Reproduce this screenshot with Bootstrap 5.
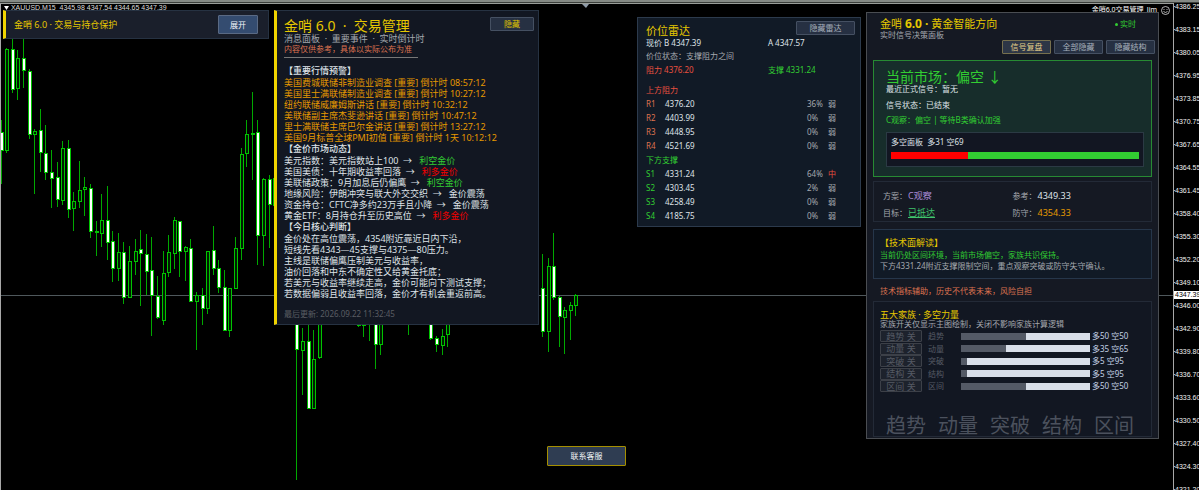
<!DOCTYPE html>
<html lang="zh-CN">
<head>
<meta charset="utf-8">
<meta name="viewport" content="width=device-width, initial-scale=1">
<title>XAUUSD M15</title>
<link href="https://cdn.jsdelivr.net/npm/bootstrap@5.3.0/dist/css/bootstrap.min.css" rel="stylesheet">
<style>
body{background:#000;color:#dfe3e8;font-family:"Noto Sans","Noto Sans CJK SC",sans-serif;font-size:8px;line-height:12px}
.desk{height:100vh;min-height:440px;overflow:hidden}
.topline{height:3px;flex:none;background:#3c403c;border-top:2px solid #858a85}
.plot{min-height:0}
.chart-area{border-top:1px solid #9a9e9a;border-left:1px solid #a8a8a8}
.candles{position:absolute;inset:0;width:100%;height:100%}
.price-axis{width:26px;border-left:1px solid #a8a8a8;font-family:"Liberation Sans",sans-serif;font-size:7px;color:#f0f0f0;overflow:hidden}
.price-axis ol{margin-top:-8px}
.price-axis li{height:23px;line-height:23px;padding-left:1px;white-space:nowrap;position:relative}
.price-axis li::before{content:"";position:absolute;left:0;top:11px;width:1px;height:1px;background:#a8a8a8}
.price-now{position:absolute;left:0;right:0;top:288px;height:8px;line-height:8px;padding-left:1px;background:#fff;color:#000}
.chart-title{position:absolute;top:-1px;left:3px;font-family:"Liberation Sans",sans-serif;font-size:7px;line-height:10px;color:#ddd;white-space:pre}
.expert{position:absolute;top:1px;right:3px;font-size:7px;line-height:10px;color:#fff}
.win{position:absolute;border:1px solid #263242;background:#121722}
.win-save{left:3px;top:10px;width:266px;height:29px;background:#1a1f2b;border-left:3px solid #f0d400}
.win-news{left:274px;top:10px;width:265px;border-left:3px solid #f0d400;padding:6px 4px 4px 7px}
.win-radar{right:338px;top:17px;width:224px;padding:3px 5px 3px 8px;background:#111a26;border-color:#2c3a4c}
.win-main{right:40px;top:12px;width:293px;border-color:#4a4d52;background:#151923;padding:4px 3px 1px 6px}
.pill{--bs-btn-font-size:8px;--bs-btn-line-height:12px;--bs-btn-padding-x:0;--bs-btn-padding-y:0;--bs-btn-border-radius:1px;--bs-btn-color:#a9b1bd;--bs-btn-bg:#263042;--bs-btn-border-color:#455062;--bs-btn-hover-color:#fff;--bs-btn-hover-bg:#344c70;width:49px;height:14px}
.pill-open{--bs-btn-bg:#344c70;--bs-btn-border-color:#5a6a84;--bs-btn-color:#f4f6fa;width:40px;height:19px;margin-right:10px}
.pill-hide{--bs-btn-color:#e0c800;width:44px}
.pill-radar{width:59px}
.pill-sand{--bs-btn-color:#e6d08a;--bs-btn-border-color:#76704e;--bs-btn-bg:#2d3646}
.pill-off{--bs-btn-font-size:9px;--bs-btn-color:#555a64;--bs-btn-bg:#1d222c;--bs-btn-border-color:#3c4048;--bs-btn-line-height:9px;width:42px;height:12px;white-space:pre}
.contact{--bs-btn-bg:#2f3d52;--bs-btn-border-color:#a58f00;--bs-btn-color:#f2f4f6;position:absolute;left:547px;top:446px;width:79px;height:20px}
.gold{color:#e6c800}.lime{color:#32cd32}.rose{color:#e8503f}.coral{color:#dd7350}.dim{color:#a4a8ae}.amber{color:#e69900}.red{color:#f00000}
.t9{font-size:9px}.t11{font-size:11px;line-height:14px}.t14{font-size:14px;line-height:16px}
.lh8{line-height:8px}.lh10{line-height:10px}.lh11{line-height:11px}.lh14{line-height:14px}.lh15{line-height:15px}.lh17{line-height:17px}
.pre{white-space:pre}
.news{font-size:9px;line-height:11px;white-space:pre}
.news h3{font-size:9px;line-height:12px;margin:0}
.rule{width:134px;height:1px;background:#777;margin:3px 0 7px}
.stamp{color:#5a5d62;margin-top:9px}
.levels{margin-top:6px}
.levels td,.levels th{padding:0;height:14px;line-height:14px;font-weight:400}
.levels .lv{width:19px}.levels .pc{width:21px}.levels .st{width:27px}
.radar-title{padding-top:4px;line-height:12px}
.tools{gap:3px;margin-top:1px}
.stack{padding-right:3px;margin-top:6px}
.panelbox{border:1px solid #232a37;padding:0 6px}
.signal{border-color:#278a33;background:#172d2b;padding:8px 7px 9px 12px}
.inner{border:1px solid #2b3a44;background:#121622;padding:3px 4px 7px;margin-top:5px}
.meter{height:7px;background:#32cd32;margin-top:4px}.meter span{display:block;height:100%;background:#f00}
.plan{margin-top:4px;padding:5px 9px 0}
.plan dt{width:25px;font-weight:400;color:#a4a8ae}.plan dd{margin:0;font-size:9px}
.plan dl{margin:0}
.tech{margin-top:7px;padding:7px 6px;background:#111a26;border-color:#26364a}
.warn{padding:6px 7px 4px}
.family{background:#121722;padding-top:8px}
.fam{height:62px;margin-top:2px}
.fam-row{height:12px}
.fam-name{width:33px;margin-left:6px;color:#555a64}
.fam-bar{width:129px;height:7px;background:#d9dfe9;margin-right:2px}.fam-bar span{display:block;height:100%;background:#545a66}
.fam-val{color:#c3d2e6}
.ghost{font-size:20px;line-height:20px;color:#4b515d;gap:12px;margin:24px 0 0 6px}
</style>
</head>
<body>
<main class="desk d-flex flex-column position-relative">
  <div class="topline"></div>
  <div class="plot d-flex flex-grow-1">
    <section class="chart-area flex-grow-1 position-relative" aria-label="XAUUSD M15">
      <svg class="candles" aria-hidden="true"><g id="chart" transform="translate(-1 -4)" shape-rendering="crispEdges"><path d="M0 295.500H3000" stroke="#4f585c"/></g><path d="M581 0h7l-3 4z" fill="#8f9ba8"/></svg>
      <div class="chart-title"><svg viewBox="0 0 5 4" width="5" height="4"><path d="M0 0h5L2.500 4z" fill="#fff"/></svg> XAUUSD.M15  4345.98 4347.54 4344.65 4347.39</div>
      <div class="expert d-flex align-items-center gap-1"><span>金哨6.0交易管理_Jim</span><svg viewBox="0 0 9 9" width="9" height="9" fill="none" stroke="#ddd"><circle cx="4.500" cy="4.500" r="4" stroke-width=".8"/><path d="M2.500 5.500q2 2 4 0M3 3v1M6 3v1" stroke-width=".8"/></svg></div>
    </section>
    <aside class="price-axis position-relative">
      <ol class="list-unstyled mb-0" id="axis"></ol>
      <div class="price-now">4347.39</div>
    </aside>
  </div>

  <section class="win win-save d-flex align-items-center justify-content-between ps-2">
    <span class="gold t9">金哨 6.0 · 交易与持仓保护</span>
    <button class="btn pill pill-open" type="button">展开</button>
  </section>

  <section class="win win-news">
    <div class="d-flex justify-content-between align-items-start">
      <h1 class="gold t14 lh17 pre fw-normal mb-0">金哨 6.0  ·  交易管理</h1>
      <button class="btn pill pill-hide" type="button">隐藏</button>
    </div>
    <div class="t9 dim pre lh10">消息面板  ·  重要事件  ·  实时倒计时</div>
    <div class="coral lh10">内容仅供参考，具体以实际公布为准</div>
    <div class="rule"></div>
    <div class="news"><h3>【重要行情预警】</h3><div class="amber">美国费城联储非制造业调查 [重要] 倒计时 08:57:12
美国里士满联储制造业调查 [重要] 倒计时 10:27:12
纽约联储威廉姆斯讲话 [重要] 倒计时 10:32:12
美联储副主席杰斐逊讲话 [重要] 倒计时 10:47:12
里士满联储主席巴尔金讲话 [重要] 倒计时 13:27:12
美国9月标普全球PMI初值 [重要] 倒计时 1天 10:12:12</div><h3>【金价市场动态】</h3><div>美元指数：美元指数站上100  →   <span class="lime">利空金价</span>
美国美债：十年期收益率回落  →   <span class="red">利多金价</span>
美联储政策：9月加息后仍偏鹰  →   <span class="lime">利空金价</span>
地缘风险：伊朗冲突与联大外交交织  →   金价震荡
资金持仓：CFTC净多约23万手且小降  →   金价震荡
黄金ETF：8月持仓升至历史高位  →   <span class="red">利多金价</span></div><h3>【今日核心判断】</h3><div>金价处在高位震荡，4354附近靠近日内下沿，
短线先看4343—45支撑与4375—80压力。
主线是联储偏鹰压制美元与收益率，
油价回落和中东不确定性又给黄金托底；
若美元与收益率继续走高，金价可能向下测试支撑；
若数据偏弱且收益率回落，金价才有机会重返前高。</div></div>
    <div class="stamp">最后更新: 2026.09.22 11:32:45</div>
  </section>

  <section class="win win-radar">
    <div class="d-flex justify-content-between align-items-start">
      <h2 class="gold t11 radar-title fw-normal mb-0">价位雷达</h2>
      <button class="btn pill pill-radar" type="button">隐藏雷达</button>
    </div>
    <div class="row g-0"><span class="col-7">现价 B 4347.39</span><span class="col-5">A 4347.57</span></div>
    <div class="dim lh14">价位状态：支撑阻力之间</div>
    <div class="row g-0 lh14"><span class="col-7 rose">阻力 4376.20</span><span class="col-5 lime">支撑 4331.24</span></div>
    <table class="levels w-100"><tbody id="levels"></tbody></table>
  </section>

  <section class="win win-main">
    <div class="d-flex justify-content-between" style="padding:0 19px 0 7px">
      <h2 class="gold t11 fw-normal mb-0">金哨 <b style="font-size:12px">6.0 ·</b> 黄金智能方向</h2>
      <span class="lime lh14"><svg viewBox="0 0 3 3" width="3" height="3"><circle cx="1.500" cy="1.500" r="1.500" fill="#32cd32"/></svg> 实时</span>
    </div>
    <div class="dim lh8" style="padding-left:7px">实时信号决策面板</div>
    <div class="tools d-flex justify-content-end">
      <button class="btn pill pill-sand" type="button">信号复盘</button>
      <button class="btn pill" type="button">全部隐藏</button>
      <button class="btn pill" type="button">隐藏结构</button>
    </div>
    <div class="stack">
      <div class="panelbox signal">
        <div class="lime t14">当前市场：偏空 ↓</div>
        <div class="lh8 mb-1">最近正式信号：暂无</div>
        <div class="lh15">信号状态：已结束</div>
        <div class="lime lh15">C观察：偏空 | 等待B类确认加强</div>
        <div class="inner"><div class="pre">多空面板  多31 空69</div><div class="meter"><span style="width:31%"></span></div></div>
      </div>
      <div class="panelbox plan d-flex lh17">
        <div class="flex-grow-1">
          <dl class="d-flex"><dt>方案：</dt><dd style="color:#a98bd6">C观察</dd></dl>
          <dl class="d-flex"><dt>目标：</dt><dd><a href="#" style="color:#3fc46c">已抵达</a></dd></dl>
        </div>
        <div class="col-6">
          <dl class="d-flex"><dt>参考：</dt><dd>4349.33</dd></dl>
          <dl class="d-flex"><dt>防守：</dt><dd class="amber">4354.33</dd></dl>
        </div>
      </div>
      <div class="panelbox tech">
        <h3 class="gold t9 fw-normal mb-0" style="line-height:12px">【技术面解读】</h3>
        <div class="lime lh11">当前仍处区间环境，当前市场偏空，家族共识保持。</div>
        <div class="dim lh11">下方4331.24附近支撑限制空间，重点观察突破或防守失守确认。</div>
      </div>
      <div class="coral warn">技术指标辅助，历史不代表未来，风险自担</div>
      <div class="panelbox family">
        <h3 class="gold t9 lh10 fw-normal mb-0">五大家族 · 多空力量</h3>
        <div class="dim lh8">家族开关仅显示主图绘制，关闭不影响家族计算逻辑</div>
        <div class="fam d-flex flex-column justify-content-between" id="fam"></div>
        <div class="ghost d-flex"><span>趋势</span><span>动量</span><span>突破</span><span>结构</span><span>区间</span></div>
      </div>
    </div>
  </section>
  <button class="btn pill contact" type="button">联系客服</button>
</main>
<script src="https://cdn.jsdelivr.net/npm/bootstrap@5.3.0/dist/js/bootstrap.bundle.min.js"></script>
<script>
// bar index, high, low, body top, body bottom, 1 = falling (filled)
const bars = [
[0,120,184,132,151,1],[1,48,153,49,151,0],[2,38,93,49,90,1],[3,50,100,58,89,0],[4,38,88,58,71,1],[5,69,139,71,135,1],
[6,129,194,131,135,0],[7,109,172,130,153,1],[8,125,180,153,173,1],[9,150,208,172,179,1],[10,162,207,177,200,1],[11,141,205,148,201,0],
[12,140,218,148,210,1],[13,192,231,201,209,0],[14,161,208,190,202,0],[15,177,216,187,190,0],[16,184,238,188,232,1],[17,221,256,231,233,1],
[18,194,247,220,234,0],[19,186,260,220,243,1],[20,231,282,241,269,1],[21,233,281,252,269,0],[22,242,304,252,298,1],[23,246,298,261,298,0],
[24,239,275,251,262,0],[25,230,306,249,254,1],[26,234,295,254,272,1],[27,237,336,270,296,1],[28,276,319,296,318,1],[29,251,325,273,321,0],
[30,235,277,252,273,0],[31,217,269,220,254,0],[32,221,277,221,252,1],[33,246,281,247,252,0],[34,239,302,248,302,1],[35,292,350,295,302,0],
[36,288,325,295,309,1],[37,251,314,251,309,0],[38,226,275,250,269,1],[39,260,293,268,288,1],[40,270,331,287,331,1],[41,288,337,288,331,0],
[42,237,289,248,289,0],[43,148,260,154,249,0],[44,120,167,134,154,0],[45,92,180,133,134,0],[46,120,265,132,236,1],[47,178,266,179,236,0],
[48,175,248,179,205,1],[49,178,206,178,206,0],
[53,300,480,300,350,1],[54,328,395,341,351,0],[55,310,409,341,409,1],[56,330,409,359,409,0],[57,310,359,310,358,0],
[64,310,327,310,326,1],[65,310,337,310,326,0],[66,310,341,310,312,0],[67,310,369,310,345,1],[68,310,355,310,345,0],[73,310,335,310,312,0],
[77,310,340,310,339,1],[78,336,352,338,345,1],[79,329,355,336,346,0],[80,310,347,310,335,0],
[97,254,337,288,332,1],[98,258,352,266,332,0],[99,233,300,266,298,1],[100,296,347,297,317,1],[101,307,354,310,318,0],[102,302,340,305,311,0],[103,294,316,295,306,0]];
document.getElementById('chart').insertAdjacentHTML('beforeend', bars.map(([i,h,l,t,b,f]) => {
  const x = Math.round(0.7 + 5.58 * i);
  return `<path d="M${x}.500 ${h}V${l}" stroke="#00a800"/><rect x="${x-1}" y="${t}.500" width="3" height="${Math.max(1,b-t-1)}" fill="${f?'#fff':'#001c00'}" stroke="#00c400"/>`;
}).join(''));
document.getElementById('axis').innerHTML = ['4386.25','4383.15','4380.05','4376.95','4373.85','4370.75','4367.65','4364.55','4361.45','4358.40','4355.30','4352.20','4349.10','4346.00','4342.90','4339.80','4336.70','4333.60','4330.50','4327.40','4324.30','4321.20'].map(p => `<li>${p}</li>`).join('');
const group = (title, cls, lv, rows) => `<tr><th colspan="4" class="${cls}">${title}</th></tr>` + rows.map(r =>
  `<tr><th class="lv ${lv}">${r[0]}</th><td>${r[1]}</td><td class="pc dim">${r[2]}</td><td class="st ${r[3]==='中'?'rose':'dim'}">${r[3]}</td></tr>`).join('');
document.getElementById('levels').innerHTML =
  group('上方阻力','rose','coral',[['R1','4376.20','36%','弱'],['R2','4403.99','0%','弱'],['R3','4448.95','0%','弱'],['R4','4521.69','0%','弱']]) +
  group('下方支撑','lime','lime',[['S1','4331.24','64%','中'],['S2','4303.45','2%','弱'],['S3','4258.49','0%','弱'],['S4','4185.75','0%','弱']]);
document.getElementById('fam').innerHTML = [['趋势',50],['动量',35],['突破',5],['结构',5],['区间',50]].map(([n, v]) =>
  `<div class="fam-row d-flex align-items-center"><button class="btn pill pill-off" type="button">${n} 关</button><span class="fam-name">${n}</span><div class="fam-bar"><span style="width:${v}%"></span></div><span class="fam-val">多${v} 空${100-v}</span></div>`).join('');
</script>
</body>
</html>
